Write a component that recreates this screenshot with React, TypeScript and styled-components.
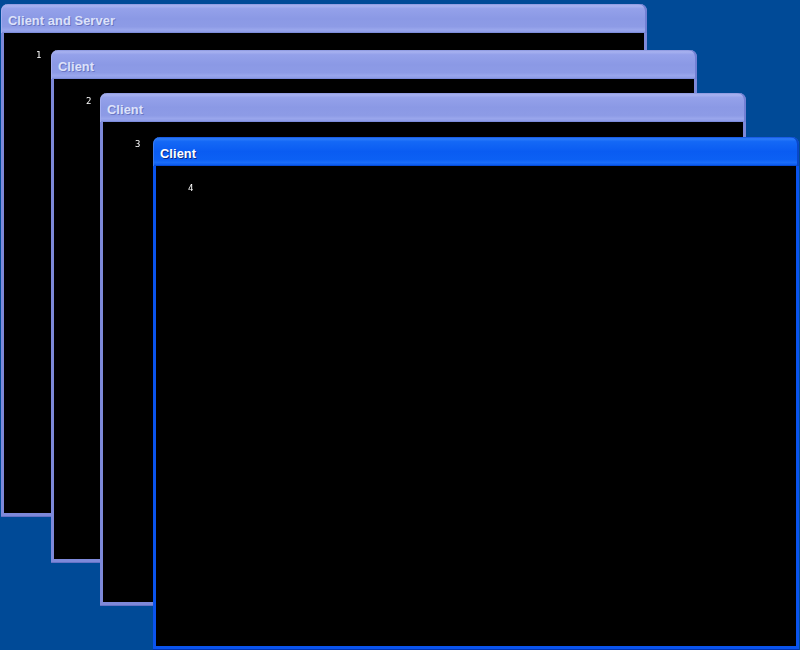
import React from "react";
import styled, { createGlobalStyle, css } from "styled-components";

const Global = createGlobalStyle`
  html, body {
    margin: 0;
    padding: 0;
    background: #004a97;
  }
  body {
    font-family: "Liberation Sans", Arial, sans-serif;
    -webkit-font-smoothing: antialiased;
  }
`;

const Desktop = styled.div`
  position: relative;
  width: 800px;
  height: 650px;
  overflow: hidden;
  background: #004a97;
`;

const Frame = styled.div`
  position: absolute;
  width: 646px;
  height: 512px;
  display: flex;
  flex-direction: column;
  border-radius: 7px 7px 0 0;
  box-sizing: border-box;
`;

const TitleBar = styled.div<{ $active: boolean }>`
  height: 29px;
  flex: none;
  display: flex;
  align-items: center;
  padding: 3px 0 0 7px;
  box-sizing: border-box;
  border-radius: 7px 7px 0 0;
  font-size: 12.8px;
  font-weight: bold;
  letter-spacing: 0.1px;
  ${({ $active }) =>
    $active
      ? css`
          color: #ffffff;
          text-shadow: 1px 1px 0 #0a2a8a;
          background: linear-gradient(
            to bottom,
            #1150e0 0%,
            #2c7cf9 6%,
            #1468f6 16%,
            #0a5cf2 50%,
            #0c60f4 78%,
            #1a6cf8 88%,
            #0e5ef0 95%,
            #0042cc 100%
          );
          box-shadow: inset 1px 0 0 #3c7cf0, inset -2px 0 0 #0a47c8;
        `
      : css`
          color: #dde2fa;
          text-shadow: 1px 1px 0 #6a76c4;
          background: linear-gradient(
            to bottom,
            #8a96de 0%,
            #a8b2f0 6%,
            #94a1ea 16%,
            #8b99e5 50%,
            #8d9be6 78%,
            #99a6ec 88%,
            #909ee8 95%,
            #7383d4 100%
          );
          box-shadow: inset 1px 0 0 #a3aef0, inset -2px 0 0 #7280d4;
        `}
`;

const Body = styled.div<{ $active: boolean }>`
  flex: 1;
  position: relative;
  background: #000;
  border: 3px solid ${({ $active }) => ($active ? "#0a54ee" : "#7d89da")};
  border-top: none;
  box-shadow: ${({ $active }) =>
    $active ? "0 1px 0 #0033b0" : "0 1px 0 #6672c6"};
`;

const Counter = styled.span`
  position: absolute;
  left: 32px;
  top: 17px;
  color: #ffffff;
  font-family: "DejaVu Sans Mono", monospace;
  font-size: 9px;
  line-height: 10px;
  will-change: transform;
`;

type WinProps = {
  title: string;
  index: number;
  left: number;
  top: number;
  active?: boolean;
};

function Window({ title, index, left, top, active = false }: WinProps) {
  return (
    <Frame style={{ left, top }}>
      <TitleBar $active={active}>{title}</TitleBar>
      <Body $active={active}>
        <Counter>{index}</Counter>
      </Body>
    </Frame>
  );
}

const windows: WinProps[] = [
  { title: "Client and Server", index: 1, left: 1, top: 4 },
  { title: "Client", index: 2, left: 51, top: 50 },
  { title: "Client", index: 3, left: 100, top: 93 },
  { title: "Client", index: 4, left: 153, top: 137, active: true },
];

export default function App() {
  return (
    <>
      <Global />
      <Desktop>
        {windows.map((w) => (
          <Window key={w.index} {...w} />
        ))}
      </Desktop>
    </>
  );
}
